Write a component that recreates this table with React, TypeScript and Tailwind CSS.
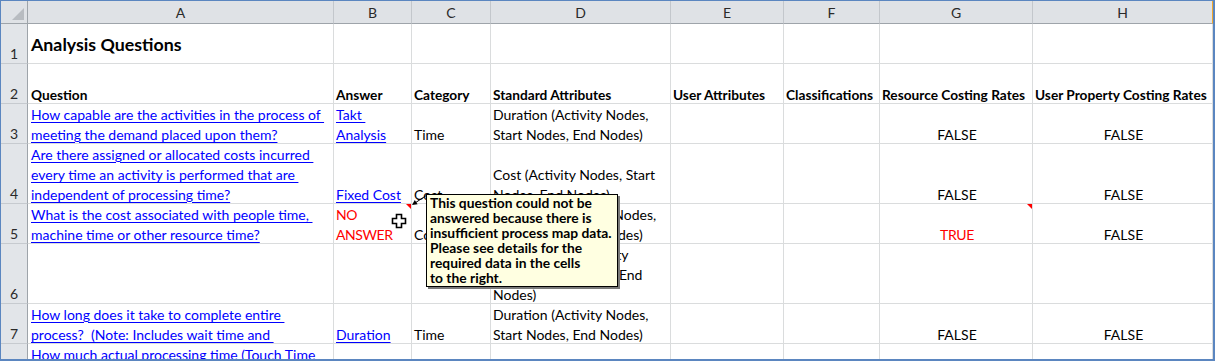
import React from 'react';

type Cell = {
  lines: string[];
  kind?: 'link' | 'red' | 'bold' | 'title';
  center?: boolean;
  note?: boolean;
};

const cols = ['A', 'B', 'C', 'D', 'E', 'F', 'G', 'H'];

const t = (lines: string[], kind?: Cell['kind'], center?: boolean, note?: boolean): Cell => ({ lines, kind, center, note });

const rows: (Cell | null)[][] = [
  [t(['Analysis Questions'], 'title'), null, null, null, null, null, null, null],
  [
    t(['Question'], 'bold'),
    t(['Answer'], 'bold'),
    t(['Category'], 'bold'),
    t(['Standard Attributes'], 'bold'),
    t(['User Attributes'], 'bold'),
    t(['Classifications'], 'bold'),
    t(['Resource Costing Rates'], 'bold'),
    t(['User Property Costing Rates'], 'bold'),
  ],
  [
    t(['How capable are the activities in the process of ', 'meeting the demand placed upon them?'], 'link'),
    t(['Takt ', 'Analysis'], 'link'),
    t(['Time']),
    t(['Duration (Activity Nodes,', 'Start Nodes, End Nodes)']),
    null,
    null,
    t(['FALSE'], undefined, true),
    t(['FALSE'], undefined, true),
  ],
  [
    t(['Are there assigned or allocated costs incurred ', 'every time an activity is performed that are ', 'independent of processing time?'], 'link'),
    t(['Fixed Cost'], 'link'),
    t(['Cost']),
    t(['Cost (Activity Nodes, Start', 'Nodes, End Nodes)']),
    null,
    null,
    t(['FALSE'], undefined, true),
    t(['FALSE'], undefined, true),
  ],
  [
    t(['What is the cost associated with people time, ', 'machine time or other resource time?'], 'link'),
    t(['NO', 'ANSWER'], 'red', false, true),
    t(['Cost']),
    t(['Resources (Activity Nodes,', 'Start Nodes, End Nodes)']),
    null,
    null,
    t(['TRUE'], 'red', true, true),
    t(['FALSE'], undefined, true),
  ],
  [
    null,
    null,
    null,
    t(['Process Time (Activity', 'Nodes, Start Nodes, End', 'Nodes)']),
    null,
    null,
    null,
    null,
  ],
  [
    t(['How long does it take to complete entire ', 'process?  (Note: Includes wait time and '], 'link'),
    t(['Duration'], 'link'),
    t(['Time']),
    t(['Duration (Activity Nodes,', 'Start Nodes, End Nodes)']),
    null,
    null,
    t(['FALSE'], undefined, true),
    t(['FALSE'], undefined, true),
  ],
  [
    t(['How much actual processing time (Touch Time ', 'and Wait Time) is required?'], 'link'),
    null,
    null,
    null,
    null,
    null,
    null,
    null,
  ],
];

const kindClass = (kind?: Cell['kind']) => {
  if (kind === 'link') return 'text-[#0000ff] underline underline-offset-[2px]';
  if (kind === 'red') return 'text-[#ff0000] tracking-[-0.4px]';
  if (kind === 'bold') return 'font-bold text-black text-[13.7px]';
  if (kind === 'title') return 'font-bold text-black text-[17.8px] mb-[11px]';
  return 'text-black';
};

const GridCell = ({ cell, col }: { cell: Cell | null; col: number }) => (
  <div
    className={`relative flex flex-col justify-end overflow-hidden border-r border-b border-[#dadcdd] ${
      col === 0 ? 'pl-[3px]' : 'pl-[2px]'
    } ${cell?.center ? 'items-center pl-0' : ''}`}
  >
    <div className={`flex flex-col -mb-[2px] ${cell?.center ? 'items-center' : ''}`}>
      {cell?.lines.map((line, i) => (
        <span key={i} className={`whitespace-pre leading-[20px] ${kindClass(cell.kind)}`}>
          {line}
        </span>
      ))}
    </div>
    {cell?.note && (
      <span className="absolute top-0 right-0 w-[5px] h-[5px] bg-[#ff0000] [clip-path:polygon(0_0,100%_0,100%_100%)]" />
    )}
  </div>
);

const Cursor = () => (
  <svg width="17" height="17" viewBox="0 0 17 17" className="absolute left-[390px] top-[212px]">
    <path
      d="M5.5 1.5h5v4h4v5h-4v4h-5v-4h-4v-5h4z"
      fill="#ffffff"
      stroke="#000000"
      strokeWidth="1.6"
      strokeLinejoin="miter"
    />
  </svg>
);

const CommentArrow = () => (
  <svg width="26" height="20" viewBox="0 0 26 20" className="absolute left-[404px] top-[189px]">
    <line x1="22" y1="5" x2="10" y2="13" stroke="#000" strokeWidth="1" />
    <polygon points="7,15 12.6,14.3 9.8,10.1" fill="#000" />
  </svg>
);

export default function App() {
  return (
    <div className="relative w-[1215px] h-[361px] overflow-hidden bg-white border-t border-l border-r-2 border-b-2 border-[#5b86c0] [font-family:Lato,sans-serif] text-[14px]">
      <div className="grid grid-cols-[27px_306px_78px_79px_180px_113px_96px_153px_180px] grid-rows-[23px_40px_40px_40px_60px_40px_60px_40px_40px]">
        {/* corner */}
        <div className="relative bg-[#dfe2e6] border-r border-b border-[#9ea4aa]">
          <div className="absolute right-[3px] bottom-[3px] w-[12px] h-[12px] bg-[#b8bcc1] [clip-path:polygon(100%_0,100%_100%,0_100%)]" />
        </div>
        {cols.map((c, i) => (
          <div
            key={c}
            className={`flex items-center justify-center bg-[#dfe2e6] border-b border-[#9ea4aa] text-[#2a2a2a] leading-none pt-[1px] ${
              i === cols.length - 1 ? 'border-r border-r-[#f0a830]' : 'border-r border-r-[#c3c7cc]'
            }`}
          >
            {c}
          </div>
        ))}
        {rows.map((row, r) => (
          <React.Fragment key={r}>
            <div className="flex items-end justify-center bg-[#e2e5e9] border-r border-b border-r-[#9ea4aa] border-b-[#c6cacf] text-[#2a2a2a] leading-[18px]">
              {r + 1}
            </div>
            {row.map((cell, c) => (
              <GridCell key={c} cell={cell} col={c} />
            ))}
          </React.Fragment>
        ))}
      </div>

      {/* comment popup */}
      <CommentArrow />
      <div className="absolute left-[425px] top-[193px] w-[192px] h-[93px] bg-[#ffffe1] border border-black shadow-[2px_2px_0_0_#7a7a7a] pl-[3px] font-bold text-[13.8px] leading-[15px] text-black whitespace-nowrap">
        <div>This question could not be</div>
        <div>answered because there is</div>
        <div>insufficient process map data.</div>
        <div>Please see details for the</div>
        <div>required data in the cells</div>
        <div>to the right.</div>
      </div>
      <Cursor />
    </div>
  );
}
